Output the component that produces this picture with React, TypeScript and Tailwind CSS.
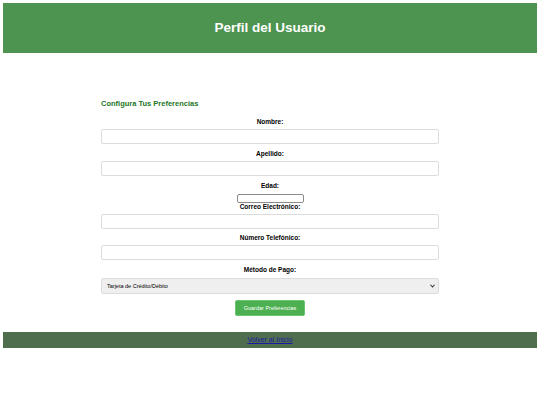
import React from 'react'

const font = { fontFamily: '"Liberation Sans", Arial, sans-serif' }

function Label({ children, className = '' }: { children: React.ReactNode; className?: string }) {
  return (
    <label className={`block text-center text-[6.5px] font-bold text-black ${className}`}>{children}</label>
  )
}

function TextInput() {
  return <input type="text" className="block w-full h-[15px] rounded-[2px] border border-[#dcdcdc] bg-white" />
}

export default function App() {
  return (
    <div className="min-h-[405px] bg-white pt-[3px]" style={font}>
      <header className="mx-[3px] h-[50px] bg-[#4c944f] flex items-center justify-center">
        <h1 className="text-[13.5px] font-bold text-white">Perfil del Usuario</h1>
      </header>

      <main className="w-[338px] mx-auto mt-[46px]">
        <h2 className="text-[7.5px] leading-[10px] font-bold text-[#24761f]">Configura Tus Preferencias</h2>

        <form className="mt-[8px]" onSubmit={e => e.preventDefault()}>
          <Label className="leading-[10px] mb-[2px]">Nombre:</Label>
          <TextInput />

          <Label className="leading-[10px] mt-[5px] mb-[2px]">Apellido:</Label>
          <TextInput />

          <Label className="leading-[10px] mt-[5px] mb-[3px]">Edad:</Label>
          <input type="number" className="block mx-auto w-[67px] h-[9px] rounded-[2px] border border-[#8a8a8a] bg-white" />

          <Label className="leading-[7px] mb-[4px]">Correo Electrónico:</Label>
          <TextInput />

          <Label className="leading-[10px] mt-[4px] mb-[2px]">Número Telefónico:</Label>
          <TextInput />

          <Label className="leading-[10px] mt-[5px] mb-[3px]">Método de Pago:</Label>
          <div className="relative">
            <select className="block w-full h-[16px] appearance-none rounded-[2px] border border-[#dcdcdc] bg-[#efefef] pl-[5px] text-[5.5px] text-black">
              <option>Tarjeta de Crédito/Débito</option>
              <option>PayPal</option>
              <option>Transferencia Bancaria</option>
            </select>
            <svg className="absolute right-[4px] top-[6px] w-[5px] h-[4px]" viewBox="0 0 10 8">
              <path d="M1 1.5 L5 6 L9 1.5" stroke="#333" strokeWidth="2.2" fill="none" />
            </svg>
          </div>

          <div className="flex justify-center mt-[6px]">
            <button className="w-[70px] h-[16px] rounded-[2px] border border-[#6cc56f] bg-[#4caf50] text-[5.5px] text-white">
              Guardar Preferencias
            </button>
          </div>
        </form>
      </main>

      <footer className="mx-[3px] mt-[16px] h-[16px] bg-[#4e6e4e] flex items-center justify-center">
        <a href="#" className="text-[7px] text-[#1a1aa6] underline">Volver al Inicio</a>
      </footer>
    </div>
  )
}
